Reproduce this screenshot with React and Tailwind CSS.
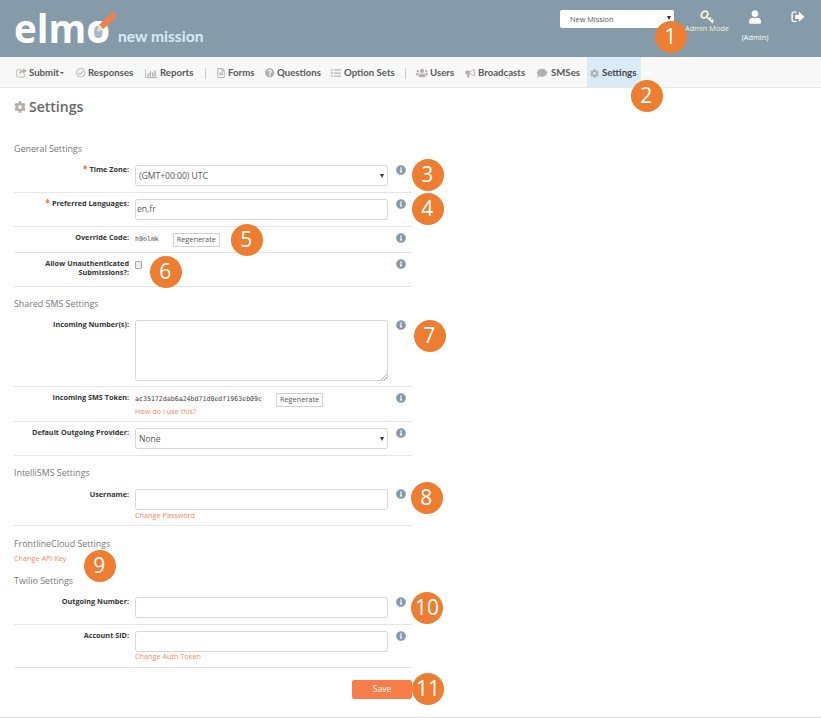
import React from "react";
import {
  FaCog, FaInfoCircle, FaUsers, FaComment, FaQuestionCircle, FaRegCheckCircle,
  FaUser, FaRegFileAlt, FaListUl,
} from "react-icons/fa";

function ShareIcon() {
  return (
    <svg viewBox="0 0 20 18" className="h-[10px] w-[11px]" fill="none" stroke="currentColor" strokeWidth="1.7">
      <path d="M9 2.5H4.500A3 3 0 0 0 1.500 5.500V13.500A3 3 0 0 0 4.500 16.500H12.500A3 3 0 0 0 15.500 13.500V11.500" />
      <path d="M13 0L19.500 5.500L13 11V7.800C9 7.600 7.500 9 8 13C4.500 9 6 3.400 13 3.400Z" fill="currentColor" stroke="none" />
    </svg>
  );
}

function ChartIcon() {
  return (
    <svg viewBox="0 0 24 18" className="h-[9px] w-[12px]" fill="currentColor">
      <path d="M0 1H1.600V16.200H24V17.800H0ZM4.500 9H7.500V15H4.500ZM9.200 4.500H12.200V15H9.200ZM14 7H17V15H14ZM18.800 3H21.800V15H18.800Z" />
    </svg>
  );
}

function BullhornIcon() {
  return (
    <svg viewBox="0 0 22 20" className="h-[10px] w-[11px]">
      <path d="M18.500 2C16 5 12.500 6.300 9 6.500V12C12.500 12.200 16 13.500 18.500 16.500Z" fill="none" stroke="currentColor" strokeWidth="1.700" />
      <path d="M9.500 5.700H2.500A2 2 0 0 0 .5 7.700V10.700A2 2 0 0 0 2.500 12.700H4C3.600 15 4 17 5 19C6.500 19.700 8 19.500 9 18.500C7.500 17 8 15.500 9 14.700V12.700ZM19.300 7.500A2 2 0 0 1 19.300 11Z" fill="currentColor" />
    </svg>
  );
}

function KeyIcon() {
  return (
    <svg viewBox="0 0 16 16" className="h-[15px] w-[15px]" fill="none" stroke="currentColor">
      <ellipse cx="4.900" cy="4.800" rx="3.900" ry="3.100" transform="rotate(-45 4.900 4.800)" strokeWidth="2" />
      <path d="M7.300 7.300L14 13.700M10 9.800L11.800 8M12.300 12.200L14.200 10.300" strokeWidth="1.900" />
    </svg>
  );
}

function SignOutIcon() {
  return (
    <svg viewBox="0 0 14 12" className="h-[12px] w-[14px]">
      <path d="M5.500 1.100H2.800A1.700 1.700 0 0 0 1.100 2.800V8.700A1.700 1.700 0 0 0 2.800 10.400H5.500" fill="none" stroke="currentColor" strokeWidth="1.400" />
      <path d="M8 .8L13.500 5.800L8 10.800V8H4.200V3.700H8Z" fill="currentColor" />
    </svg>
  );
}

function Badge({ n, place }) {
  return (
    <div className={"absolute z-10 flex h-[32px] w-[32px] items-center justify-center rounded-full bg-[#ed7d31] pr-[1.500px] text-[21px] leading-none text-white " + place}>
      <span className="-mt-[2px]">{n}</span>
    </div>
  );
}

function NavItem({ icon, label, width, iconWidth, active, caret }) {
  return (
    <a className={"flex h-full shrink-0 items-center " + width + (active ? " bg-[#d9ebf7] text-[#444]" : "")}>
      <span className={"shrink-0 pt-[2px] text-[#b5b0ad] " + iconWidth}>{icon}</span>
      <span className="whitespace-nowrap pt-px">{label}</span>
      {caret && <span className="ml-px mt-[2px] border-x-[2.5px] border-t-[2.5px] border-x-transparent border-t-[#555]" />}
    </a>
  );
}

function Info() {
  return <FaInfoCircle className="ml-auto mr-[6.500px] h-[10px] w-[10px] shrink-0 text-[#859aaa]" />;
}

function Row({ label, required, height, children, labelTop = "-mt-px", pad = "pt-[6px]" }) {
  return (
    <div className={"flex items-start border-b border-[#e4e4e4] " + height + " " + pad}>
      <div className={"w-[115px] shrink-0 whitespace-pre-line text-right text-[7.250px] font-bold leading-[10px] text-[#333] " + labelTop}>
        {required && <span className="text-[8px] leading-none text-[#f5632f]">* </span>}
        {label}
      </div>
      <div className="ml-[6px] w-[254px] shrink-0">{children}</div>
      <Info />
    </div>
  );
}

const field = "flex h-[21px] w-[253px] items-center rounded-[2.500px] border border-[#d6d6d6] bg-white text-[8.550px] text-[#555]";

function Select({ value }) {
  return (
    <div className={field + " justify-between pl-[3px] pr-[3px]"}>
      <span className="pt-px">{value}</span>
      <span className="border-x-[2px] border-t-[4px] border-x-transparent border-t-[#333]" />
    </div>
  );
}

function Input({ value }) {
  return <div className={field + " pl-px"}>{value}</div>;
}

function Link({ children, top = "" }) {
  return <a className={"block text-[7.250px] leading-[10px] text-[#f9875f] " + top}>{children}</a>;
}

function Regenerate() {
  return (
    <span className="ml-[14px] flex h-[14px] w-[47px] items-center justify-center rounded-[2px] border border-[#d0d0d0] font-['Open_Sans',sans-serif] text-[7.350px] text-[#555]">
      Regenerate
    </span>
  );
}

function Heading({ children, height }) {
  return <h2 className={"box-content text-[8.900px] leading-[12px] text-[#777] " + height}>{children}</h2>;
}

function Divider({ gap }) {
  return <span className={"mt-[2px] h-[11px] w-px shrink-0 bg-[#ccc] " + gap} />;
}

export default function App() {
  return (
    <div className="relative h-[718px] w-[821px] overflow-hidden border-b border-[#d5d5d5] bg-white font-['Open_Sans',sans-serif]">
      <header className="flex h-[57px] items-start bg-[#869ba9] text-white">
        <svg viewBox="0 0 104 57" className="ml-[14px] h-[57px] w-[104px] shrink-0 overflow-visible">
          <circle cx="84" cy="33" r="7" fill="#a9bac5" />
          <text x="0" y="43" fontFamily="Open Sans, sans-serif" fontWeight="700" fontSize="40" textLength="96" lengthAdjust="spacingAndGlyphs" fill="#fff">elmo</text>
          <path d="M83 32L85.200 24.500L89.500 29Z" fill="#f5e3c2" />
          <path d="M85.200 24.700L97.300 13.300Q99 11.800 101 13.700Q103.200 16 101.500 17.700L89.300 29Z" fill="#f77e48" />
        </svg>
        <div className="mt-[26px] font-[Lato,sans-serif] text-[15.600px] font-bold leading-[20px] text-[#d7ebf6]">new mission</div>
        <div className="ml-auto mt-[10px] flex h-[18px] w-[114px] items-center justify-between rounded-[2px] bg-white pl-[10px] pr-[3px] text-[7.350px] text-[#555]">
          <span className="pt-[2px]">New Mission</span>
          <span className="mb-[2px] border-x-[2px] border-t-[4px] border-x-transparent border-t-[#333]" />
        </div>
        <div className="ml-[11px] flex w-[44px] flex-col items-center pt-[10px] text-[7.350px] leading-[10px] text-[#f8f4cf]">
          <KeyIcon />
          <span className="-mt-[2px] whitespace-nowrap">Admin Mode</span>
        </div>
        <div className="ml-[8px] flex w-[36px] flex-col items-center pt-[10px] text-[7.350px] leading-[10px]">
          <FaUser className="h-[14px] w-[12px]" />
          <span className="mt-[8px]">(Admin)</span>
        </div>
        <div className="ml-[18px] mr-[16px] pt-[11px]"><SignOutIcon /></div>
      </header>

      <nav className="flex h-[31px] items-center border-b border-[#e7e7e7] bg-[#f8f8f8] pl-[16px] font-[Lato,sans-serif] text-[9.650px] font-bold text-[#595959]">
        <NavItem width="w-[60px]" iconWidth="w-[13px]" icon={<ShareIcon />} label="Submit" caret />
        <NavItem width="w-[69px]" iconWidth="w-[12px]" icon={<FaRegCheckCircle size={9.500} />} label="Responses" />
        <NavItem width="w-[60px]" iconWidth="w-[15px]" icon={<ChartIcon />} label="Reports" />
        <Divider gap="mr-[10px]" />
        <NavItem width="w-[49px]" iconWidth="w-[12px]" icon={<FaRegFileAlt size={10} />} label="Forms" />
        <NavItem width="w-[66px]" iconWidth="w-[12px]" icon={<FaQuestionCircle size={9.500} />} label="Questions" />
        <NavItem width="w-[74px]" iconWidth="w-[13px]" icon={<FaListUl size={10} />} label="Option Sets" />
        <Divider gap="mr-[10px]" />
        <NavItem width="w-[49px]" iconWidth="w-[14px]" icon={<FaUsers size={12} />} label="Users" />
        <NavItem width="w-[72px]" iconWidth="w-[13px]" icon={<BullhornIcon />} label="Broadcasts" />
        <NavItem width="w-[50px]" iconWidth="w-[14px]" icon={<FaComment size={10} />} label="SMSes" />
        <NavItem width="w-[54px] pl-[3px]" iconWidth="w-[12px]" icon={<FaCog size={9} />} label="Settings" active />
      </nav>

      <main className="w-[412px] pl-[14px]">
        <h1 className="flex h-[55px] items-start pt-[9px] text-[14px] font-semibold leading-[20px] text-[#666]">
          <FaCog className="mr-[3px] mt-[4px] h-[12px] w-[12px] text-[#b5b0ad]" />
          Settings
        </h1>

        <Heading height="h-[16px]">General Settings</Heading>
        <Row label="Time Zone:" required height="h-[34px]"><Select value="(GMT+00:00) UTC" /></Row>
        <Row label="Preferred Languages:" required height="h-[34px]"><Input value="en,fr" /></Row>
        <Row label="Override Code:" height="h-[26px]">
          <div className="flex items-center font-['DejaVu_Sans_Mono',monospace] text-[6.600px] text-[#444]">
            h9olmk<Regenerate />
          </div>
        </Row>
        <Row label={"Allow Unauthenticated\nSubmissions?:"} height="h-[34px]" labelTop="!leading-[9px]">
          <div className="mt-[2px] h-[8px] w-[7px] rounded-[1px] border border-[#aaa] bg-[#eee]" />
        </Row>

        <Heading height="pt-[11px] h-[17px]">Shared SMS Settings</Heading>
        <Row label="Incoming Number(s):" height="h-[72px]" pad="pt-[5px]">
          <div className="flex h-[61px] w-[253px] items-end justify-end rounded-[2.500px] border border-[#d6d6d6]">
            <svg viewBox="0 0 6 6" className="h-[6px] w-[6px]" stroke="#888" strokeWidth=".7"><path d="M0 6L6 0M3 6L6 3" /></svg>
          </div>
        </Row>
        <Row label="Incoming SMS Token:" height="h-[35px]">
          <div className="flex items-center font-['DejaVu_Sans_Mono',monospace] text-[6.600px] text-[#444]">
            ac35172dab6a24bd71d0edf1963eb09c<Regenerate />
          </div>
          <Link top="-mt-px">How do I use this?</Link>
        </Row>
        <Row label="Default Outgoing Provider:" height="h-[34px]"><Select value="None" /></Row>

        <Heading height="pt-[11px] h-[16px]">IntelliSMS Settings</Heading>
        <Row label="Username:" height="h-[43px]" labelTop=""><Input value="" /><Link>Change Password</Link></Row>

        <Heading height="pt-[12px] h-[15px]">FrontlineCloud Settings</Heading>
        <Link>Change API Key</Link>
        <Heading height="pt-[12px] h-[16px]">Twilio Settings</Heading>
        <Row label="Outgoing Number:" height="h-[34px]"><Input value="" /></Row>
        <Row label="Account SID:" height="h-[43px]"><Input value="" /><Link top="-mt-px">Change Auth Token</Link></Row>
        <div className="flex justify-end pt-[12px]">
          <button className="h-[19px] w-[60px] rounded-[2px] bg-[#f77e48] text-[8.500px] text-white">Save</button>
        </div>
      </main>

      <Badge n="1" place="left-[655px] top-[21px]" />
      <Badge n="2" place="left-[631px] top-[80px]" />
      <Badge n="3" place="left-[412px] top-[159px]" />
      <Badge n="4" place="left-[412px] top-[193px]" />
      <Badge n="5" place="left-[231px] top-[224px]" />
      <Badge n="6" place="left-[150px] top-[256px]" />
      <Badge n="7" place="left-[414px] top-[320px]" />
      <Badge n="8" place="left-[411px] top-[482px]" />
      <Badge n="9" place="left-[84px] top-[550px]" />
      <Badge n="10" place="left-[411px] top-[592px] !pr-0" />
      <Badge n="11" place="left-[412px] top-[673px] !pr-0" />
    </div>
  );
}
